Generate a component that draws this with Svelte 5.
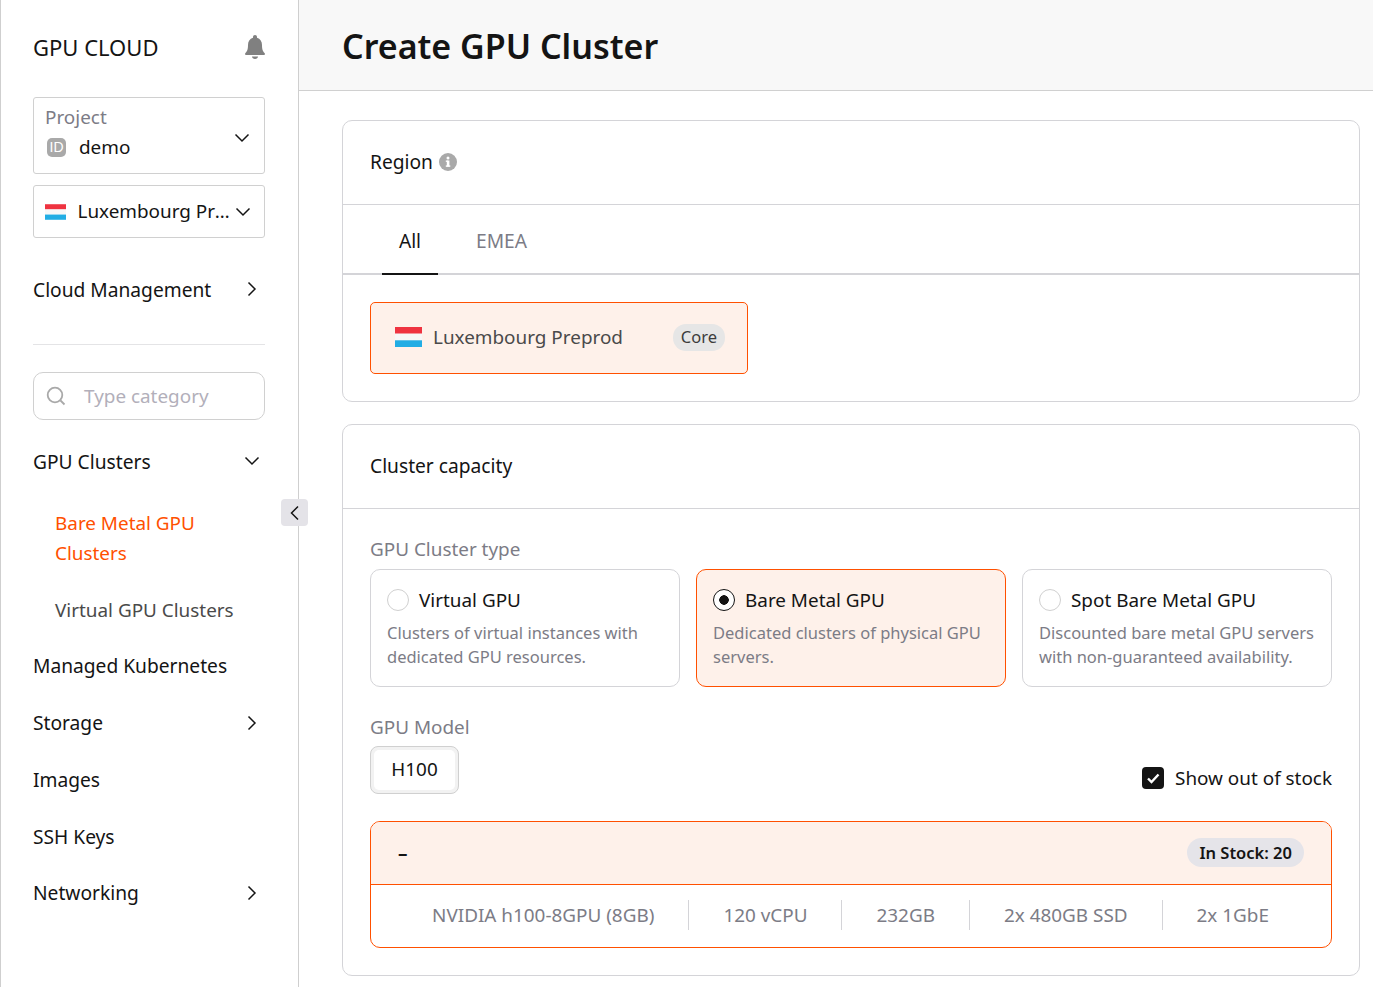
<script>
  let types = [
    { name: 'Virtual GPU', desc: 'Clusters of virtual instances with dedicated GPU resources.', active: false },
    { name: 'Bare Metal GPU', desc: 'Dedicated clusters of physical GPU servers.', active: true },
    { name: 'Spot Bare Metal GPU', desc: 'Discounted bare metal GPU servers with non-guaranteed availability.', active: false }
  ];
  let specs = ['NVIDIA h100-8GPU (8GB)', '120 vCPU', '232GB', '2x 480GB SSD', '2x 1GbE'];
</script>

{#snippet down()}
  <svg class="chev" width="16" height="10" viewBox="0 0 16 10"><path d="M1.5 1.5 8 8l6.500-6.500" /></svg>
{/snippet}
{#snippet right()}
  <svg class="chev" width="10" height="16" viewBox="0 0 10 16"><path d="M1.500 1.500 8 8l-6.500 6.500" /></svg>
{/snippet}
{#snippet flag(w, h)}
  <svg class="flag" width={w} height={h} viewBox="0 0 27 20"><rect width="27" height="7" fill="#ef3340" /><rect y="6.500" width="27" height="7" fill="#f7f7f7" /><rect y="13.300" width="27" height="6.700" fill="#22ade4" /></svg>
{/snippet}

<div class="page">
  <aside class="sidebar">
    <div class="brand">
      <span>GPU CLOUD</span>
      <svg class="bell" width="24" height="26" viewBox="0 0 24 26"><path fill="#808080" d="M12 1c-1.200 0-2 .9-2 2v.7C6.700 4.600 5 7.500 5 11c0 4.600-1 6.500-2.600 8.100-.7.800-.2 2 .9 2h17.400c1.100 0 1.600-1.200.9-2C20 17.500 19 15.600 19 11c0-3.500-1.700-6.400-5-7.300V3c0-1.100-.8-2-2-2Z" /><path fill="#808080" d="M9 22.500h6c0 1.500-1.300 2.500-3 2.500s-3-1-3-2.500Z" /></svg>
    </div>

    <div class="select project">
      <div class="project-text">
        <div class="select-label">Project</div>
        <div class="select-value">
          <span class="id-badge">ID</span>
          <span>demo</span>
        </div>
      </div>
      {@render down()}
    </div>

    <div class="select region-select">
      {@render flag(21, 16)}
      <span class="ellipsis">Luxembourg Preprod</span>
      {@render down()}
    </div>

    <div class="nav-row cloud">
      <span>Cloud Management</span>
      {@render right()}
    </div>

    <hr />

    <div class="search">
      <svg width="20" height="20" viewBox="0 0 20 20" fill="none" stroke="#a9a9a9" stroke-width="1.800"><circle cx="9" cy="9" r="7.300" /><path d="m14.500 14.500 4 4" /></svg>
      <span>Type category</span>
    </div>

    <nav>
      <div class="nav-row open">
        <span>GPU Clusters</span>
        {@render down()}
      </div>
      <div class="sub active">Bare Metal GPU Clusters</div>
      <div class="sub">Virtual GPU Clusters</div>
      <div class="nav-row"><span>Managed Kubernetes</span></div>
      <div class="nav-row"><span>Storage</span>{@render right()}</div>
      <div class="nav-row"><span>Images</span></div>
      <div class="nav-row"><span>SSH Keys</span></div>
      <div class="nav-row"><span>Networking</span>{@render right()}</div>
    </nav>

    <button class="collapse" aria-label="Collapse">
      <svg width="10" height="16" viewBox="0 0 10 16"><path d="M8 1.500 1.500 8 8 14.500" /></svg>
    </button>
  </aside>

  <main>
    <header><h1>Create GPU Cluster</h1></header>

    <div class="content">
      <section class="card region">
        <div class="card-head">
          <span>Region</span>
          <svg width="18" height="18" viewBox="0 0 18 18"><circle cx="9" cy="9" r="9" fill="#a9a9a9" /><rect x="7.800" y="7.500" width="2.600" height="6" fill="#fff" /><rect x="6.800" y="7.500" width="2" height="1.400" fill="#fff" /><rect x="6.800" y="12.400" width="4.500" height="1.400" fill="#fff" /><circle cx="9" cy="5" r="1.500" fill="#fff" /></svg>
        </div>
        <div class="tabs">
          <div class="tab current">All</div>
          <div class="tab">EMEA</div>
        </div>
        <div class="region-body">
          <div class="region-item">
            {@render flag(27, 20)}
            <span class="region-name">Luxembourg Preprod</span>
            <span class="core">Core</span>
          </div>
        </div>
      </section>

      <section class="card capacity">
        <div class="card-head">Cluster capacity</div>
        <div class="capacity-body">
          <div class="field-label">GPU Cluster type</div>
          <div class="types">
            {#each types as t}
              <div class="type" class:on={t.active}>
                <div class="type-title">
                  <span class="radio"></span>
                  <span>{t.name}</span>
                </div>
                <p>{t.desc}</p>
              </div>
            {/each}
          </div>

          <div class="model-row">
            <div>
              <div class="field-label">GPU Model</div>
              <div class="segment"><span>H100</span></div>
            </div>
            <div class="stock-toggle">
              <svg width="22" height="22" viewBox="0 0 22 22"><rect width="22" height="22" rx="4" fill="#141414" /><path d="m6 11.500 3.500 3.500L16.500 7.500" fill="none" stroke="#fff" stroke-width="2.400" /></svg>
              <span>Show out of stock</span>
            </div>
          </div>

          <div class="offer">
            <div class="offer-head">
              <span class="dash">–</span>
              <span class="stock">In Stock: 20</span>
            </div>
            <div class="offer-specs">
              {#each specs as s}
                <span class="spec">{s}</span>
              {/each}
            </div>
          </div>
        </div>
      </section>
    </div>
  </main>
</div>

<style>
  :global(body) {
    margin: 0;
    overflow: hidden;
    background: #fff;
  }
  .page {
    display: flex;
    height: 987px;
    font-family: "Noto Sans", sans-serif;
    font-size: 18.900px;
    color: #141414;
  }
  .chev {
    flex: none;
    fill: none;
    stroke: #141414;
    stroke-width: 1.500;
  }

  .sidebar {
    position: relative;
    box-sizing: border-box;
    width: 299px;
    flex: none;
    padding: 0 33px 0 32px;
    border-left: 1px solid #cfcfcf;
    border-right: 1px solid #cfcfcf;
  }
  .brand {
    display: flex;
    align-items: center;
    justify-content: space-between;
    height: 97px;
    padding-bottom: 3px;
    font-size: 22px;
    box-sizing: border-box;
  }
  .bell {
    margin-right: -2px;
  }
  .select {
    box-sizing: border-box;
    display: flex;
    align-items: center;
    justify-content: space-between;
    border: 1px solid #d0d0d0;
    border-radius: 3px;
  }
  .project {
    height: 77px;
    padding: 0 14px 0 11px;
  }
  .project-text {
    margin-top: -7px;
  }
  .project .chev {
    margin-top: 5px;
  }
  .select-label {
    color: #7c7c86;
    line-height: 30px;
  }
  .select-value {
    display: flex;
    align-items: center;
    gap: 13px;
    line-height: 30px;
    padding-left: 2px;
  }
  .id-badge {
    width: 19px;
    height: 19px;
    border-radius: 5px;
    background: #a9a9a9;
    color: #fff;
    font-family: "Liberation Sans", sans-serif;
    font-size: 14px;
    line-height: 19px;
    text-align: center;
  }
  .region-select {
    height: 53px;
    margin-top: 11px;
    padding: 0 13px 0 11px;
    gap: 4px;
  }
  .region-select .flag {
    flex: none;
    margin-right: 7.500px;
  }
  .ellipsis {
    flex: 1;
    min-width: 0;
    margin-bottom: 2px;
    white-space: nowrap;
    overflow: hidden;
    text-overflow: ellipsis;
  }
  .nav-row {
    display: flex;
    align-items: center;
    justify-content: space-between;
    height: 56.750px;
    padding-right: 8px;
    font-size: 19.200px;
  }
  .open .chev {
    margin-right: -3px;
  }
  .cloud {
    margin-top: 23px;
  }
  hr {
    border: 0;
    border-top: 1px solid #e4e4e6;
    margin: 26px 0 27px;
  }
  .search {
    box-sizing: border-box;
    display: flex;
    align-items: center;
    gap: 18px;
    height: 48px;
    padding-left: 12px;
    border: 1px solid #d0d0d0;
    border-radius: 10px;
    color: #b2afba;
  }
  nav {
    margin-top: 13px;
  }
  .sub {
    padding: 0 25px 0 22px;
    line-height: 30px;
    color: #4a4a4a;
    margin-bottom: 13px;
  }
  .sub.active {
    color: #ff5000;
    margin-top: 18px;
    margin-bottom: 27px;
    padding-right: 40px;
  }
  .collapse {
    position: absolute;
    left: 280px;
    top: 499px;
    width: 27px;
    height: 27px;
    padding: 0;
    border: 0;
    border-radius: 4px;
    background: #e4e3e8;
    display: flex;
    align-items: center;
    justify-content: center;
  }
  .collapse path {
    fill: none;
    stroke: #141414;
    stroke-width: 1.500;
  }

  main {
    flex: 1;
    min-width: 0;
  }
  header {
    box-sizing: border-box;
    height: 91px;
    padding-left: 43px;
    display: flex;
    align-items: center;
    background: #f8f8f8;
    border-bottom: 1px solid #d0d0d0;
  }
  h1 {
    margin: 1px 0 0;
    font-size: 34px;
    font-weight: 600;
  }
  .content {
    padding: 29px 13px 0 43px;
    display: flex;
    flex-direction: column;
    gap: 22px;
  }
  .card {
    border: 1px solid #d4d4d8;
    border-radius: 10px;
  }
  .card-head {
    box-sizing: border-box;
    height: 84px;
    padding: 0 27px 2px;
    display: flex;
    align-items: center;
    gap: 6px;
    border-bottom: 1px solid #d4d4d8;
    font-size: 19.200px;
  }
  .tabs {
    display: flex;
    padding-left: 39px;
    gap: 38px;
    height: 70px;
    border-bottom: 2px solid #d4d4d8;
    box-sizing: border-box;
  }
  .tab {
    position: relative;
    line-height: 72px;
    color: #7c7c86;
    font-size: 19.200px;
  }
  .tab.current {
    color: #141414;
    width: 56px;
    text-align: center;
  }
  .tab.current::after {
    content: "";
    position: absolute;
    left: 0;
    right: 0;
    bottom: -2px;
    height: 2px;
    background: #141414;
  }
  .region-body {
    padding: 27px 27px 27px;
  }
  .region-item {
    box-sizing: border-box;
    display: flex;
    align-items: center;
    width: 378px;
    height: 72px;
    padding: 0 22px 2px 24px;
    background: #fef1ea;
    border: 1px solid #ff5000;
    border-radius: 5px;
  }
  .region-name {
    flex: 1;
    margin-left: 11px;
    color: #4a4a4a;
  }
  .core {
    background: #e6e6e6;
    border-radius: 13px;
    padding: 0 8px 1px;
    font-size: 16.500px;
    line-height: 26px;
    color: #3c3c3c;
  }
  .capacity-body {
    padding: 26px 27px 27px;
  }
  .field-label {
    color: #7c7c86;
    line-height: 28px;
  }
  .types {
    display: grid;
    grid-template-columns: repeat(3, 1fr);
    gap: 16px;
    margin-top: 6px;
  }
  .type {
    box-sizing: border-box;
    height: 118px;
    padding: 16px 16px 0;
    border: 1px solid #d4d4d8;
    border-radius: 10px;
  }
  .type.on {
    background: #fef1ea;
    border-color: #ff5000;
  }
  .type-title {
    display: flex;
    align-items: center;
    gap: 10px;
    line-height: 28px;
    height: 28px;
    margin-bottom: 7px;
  }
  .radio {
    box-sizing: border-box;
    width: 22px;
    height: 22px;
    border: 1px solid #d0d0d0;
    border-radius: 50%;
    background: #fff;
  }
  .on .radio {
    border: 1.500px solid #141414;
    background: radial-gradient(circle, #141414 0 4.500px, #fff 5px);
  }
  .type p {
    margin: 0;
    font-size: 16.500px;
    line-height: 24px;
    color: #7c7c86;
  }
  .model-row {
    display: flex;
    align-items: flex-end;
    justify-content: space-between;
    margin-top: 26px;
  }
  .segment {
    box-sizing: border-box;
    width: 89px;
    height: 48px;
    margin-top: 5px;
    padding: 3px;
    border: 1px solid #d0d0d0;
    border-radius: 8px;
    background: #f2f2f2;
    display: flex;
  }
  .segment span {
    flex: 1;
    background: #fff;
    border-radius: 5px;
    text-align: center;
    line-height: 38px;
  }
  .stock-toggle {
    display: flex;
    align-items: center;
    gap: 11px;
    height: 28px;
    margin-bottom: 2px;
  }
  .offer {
    margin-top: 27px;
    border: 1px solid #ff5000;
    border-radius: 10px;
    overflow: hidden;
  }
  .offer-head {
    box-sizing: border-box;
    height: 63px;
    padding: 0 27px 2px;
    display: flex;
    align-items: center;
    justify-content: space-between;
    background: #fef1ea;
    border-bottom: 1px solid #ff5000;
  }
  .dash {
    margin-top: 2px;
    font-weight: 600;
  }
  .stock {
    background: #e5e4e9;
    border-radius: 15px;
    padding: 0 12px;
    font-size: 16.500px;
    font-weight: 600;
    line-height: 29px;
  }
  .offer-specs {
    box-sizing: border-box;
    height: 62px;
    padding: 0 1px 2px 0;
    display: flex;
    align-items: center;
    justify-content: center;
    color: #7c7c86;
  }
  .spec {
    padding: 0 34px;
    line-height: 30px;
    border-left: 1px solid #d4d4d8;
  }
  .spec:first-child {
    border-left: 0;
  }
</style>
